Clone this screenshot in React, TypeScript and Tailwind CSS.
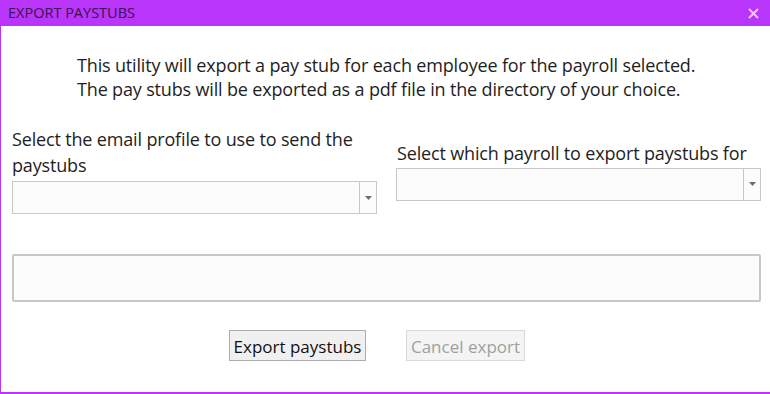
import React from "react";

function Combo({ className = "" }: { className?: string }) {
  return (
    <div className={`flex h-[33px] border border-[#c8c8c8] bg-[#fcfcfc] ${className}`}>
      <div className="flex-1" />
      <div className="flex w-[17px] items-center justify-center border-l border-[#c8c8c8]">
        <svg width="7" height="4" viewBox="0 0 7 4">
          <path d="M0 0 H7 L3.5 4 Z" fill="#6e6e6e" />
        </svg>
      </div>
    </div>
  );
}

export default function App() {
  return (
    <div
      className="flex h-[394px] w-[770px] flex-col border-b-2 border-l border-[#b935f9] bg-white text-[#1e1e1e]"
      style={{ fontFamily: '"Open Sans", "Noto Sans", sans-serif' }}
    >
      <div className="flex h-[26px] shrink-0 items-center justify-between bg-[#b935f9] pl-[7px] pr-[11px]">
        <span className="text-[14.5px] leading-none text-[#3a1050]">EXPORT PAYSTUBS</span>
        <svg width="11" height="11" viewBox="0 0 11 11">
          <path d="M1 1 L10 10 M10 1 L1 10" stroke="#f2c9fb" strokeWidth="2" />
        </svg>
      </div>
      <div className="flex flex-1 flex-col pl-[11px] pr-[9px]">
        <div className="mt-[27px] whitespace-nowrap pl-[65px] text-[18px] leading-[24px] tracking-[-0.16px]">
          <div>This utility will export a pay stub for each employee for the payroll selected.</div>
          <div>The pay stubs will be exported as a pdf file in the directory of your choice.</div>
        </div>
        <div className="mt-[25px] flex items-center gap-[19px]">
          <div className="flex w-[365px] flex-col">
            <div className="pr-[8px] text-[18px] leading-[26px] tracking-[-0.16px]">
              Select the email profile to use to send the paystubs
            </div>
            <Combo className="mt-[3px]" />
          </div>
          <div className="flex flex-1 flex-col">
            <div className="whitespace-nowrap pl-[1px] text-[18px] leading-[26px] tracking-[-0.16px]">
              Select which payroll to export paystubs for
            </div>
            <Combo className="mt-[2px]" />
          </div>
        </div>
        <div className="mt-[40px] h-[48px] rounded-[2px] border-2 border-[#c8c8c8] bg-[#fcfcfc]" />
        <div className="mt-[28px] flex pl-[217px]">
          <button className="h-[31px] w-[137px] whitespace-nowrap border border-[#adadad] bg-[#f0f0f0] pt-[2px] text-[17px] leading-none text-[#111]">
            Export paystubs
          </button>
          <button
            disabled
            className="ml-[40px] h-[31px] w-[119px] whitespace-nowrap border border-[#d9d9d9] bg-[#f4f4f4] pt-[2px] text-[17px] leading-none text-[#a0a0a0]"
          >
            Cancel export
          </button>
        </div>
      </div>
    </div>
  );
}
